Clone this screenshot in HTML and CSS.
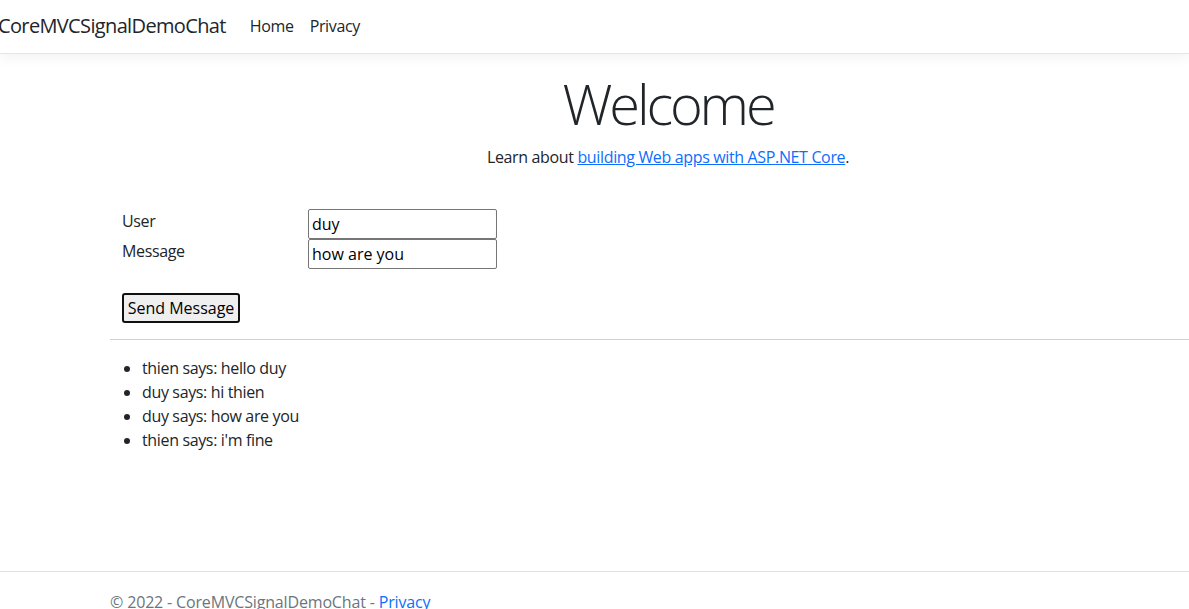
FILE: index.html
```html
<!DOCTYPE html>
<html lang="en">
<head>
<meta charset="utf-8">
<title>Home Page - CoreMVCSignalDemoChat</title>
<link rel="stylesheet" href="styles.css">
</head>
<body>
<header>
  <nav class="navbar">
    <div class="nav-inner">
      <a class="brand" href="#">CoreMVCSignalDemoChat</a>
      <ul class="nav-links">
        <li><a class="nav-link" href="#">Home</a></li>
        <li><a class="nav-link" href="#">Privacy</a></li>
      </ul>
    </div>
  </nav>
</header>
<div class="container">
  <main>
    <div class="intro">
      <h1 class="display">Welcome</h1>
      <p class="lead-text">Learn about <a class="link" href="#">building Web apps with ASP.NET Core</a>.</p>
    </div>
    <div class="chat-form">
      <div class="form-row">
        <span class="form-label">User</span>
        <input class="field" type="text" value="duy">
      </div>
      <div class="form-row">
        <span class="form-label">Message</span>
        <input class="field" type="text" value="how are you">
      </div>
      <div class="button-row">
        <button class="send-btn" type="button">Send Message</button>
      </div>
    </div>
    <hr class="divider">
    <ul class="messages">
      <li>thien says: hello duy</li>
      <li>duy says: hi thien</li>
      <li>duy says: how are you</li>
      <li>thien says: i'm fine</li>
    </ul>
  </main>
</div>
<footer class="footer">
  <div class="footer-inner">© 2022 - CoreMVCSignalDemoChat - <a class="link-plain" href="#">Privacy</a></div>
</footer>
</body>
</html>
```

FILE: styles.css
```css
html, body {
  margin: 0;
  padding: 0;
}
body {
  font-family: "Open Sans", "Noto Sans", sans-serif;
  font-size: 16px;
  line-height: 24px;
  letter-spacing: -0.022em;
  color: #212529;
  background: #fff;
  overflow: hidden;
  width: 1189px;
  height: 609px;
}
.navbar {
  height: 53px;
  border-bottom: 1px solid #e5e5e5;
  box-shadow: 0 4px 12px rgba(0, 0, 0, 0.05);
  background: #fff;
  box-sizing: content-box;
}
.nav-inner {
  display: flex;
  align-items: center;
  height: 52px;
  padding-left: 0;
}
.brand {
  margin-left: -2px;
  margin-right: 16px;
  font-size: 20px;
  line-height: 30px;
  letter-spacing: -0.032em;
  color: #212529;
  text-decoration: none;
  white-space: nowrap;
}
.nav-links {
  display: flex;
  list-style: none;
  margin: 0;
  padding: 0;
}
.nav-link {
  display: block;
  padding: 8px;
  color: #212529;
  text-decoration: none;
}
.container {
  margin-left: 110px;
  width: 1116px;
  margin-top: 16px;
}
.intro {
  text-align: center;
}
.display {
  margin: 0 0 8px;
  font-size: 56px;
  font-weight: 300;
  line-height: 67px;
  letter-spacing: -0.056em;
  color: #212529;
}
.lead-text {
  margin: 0 0 16px;
}
.link {
  color: #0d6efd;
  text-decoration: underline;
}
.chat-form {
  padding: 24px 12px 0;
}
.form-row {
  display: flex;
  align-items: flex-start;
}
.form-label {
  width: 186px;
  flex: none;
}
.field {
  width: 189px;
  height: 30px;
  box-sizing: border-box;
  margin: 0;
  padding: 1px 3px;
  border: 1px solid #767676;
  border-radius: 2px;
  font: inherit;
  color: #000;
  background: #fff;
}
.button-row {
  padding-top: 24px;
}
.send-btn {
  height: 30px;
  width: 118px;
  box-sizing: border-box;
  margin: 0;
  padding: 0;
  border: 2px solid #101010;
  border-radius: 3px;
  background: #efefef;
  font: inherit;
  color: #000;
  white-space: nowrap;
}
.divider {
  margin: 16px 0;
  border: 0;
  border-top: 1px solid #d0d0d0;
  height: 0;
}
.messages {
  margin: 0 0 16px;
  padding-left: 32px;
}
.footer {
  margin-top: 119px;
  border-top: 1px solid #dee2e6;
  line-height: 60px;
  letter-spacing: -0.01em;
  color: #6c757d;
  white-space: nowrap;
}
.footer-inner {
  padding-left: 110px;
}
.link-plain {
  color: #0d6efd;
  text-decoration: none;
}
```
